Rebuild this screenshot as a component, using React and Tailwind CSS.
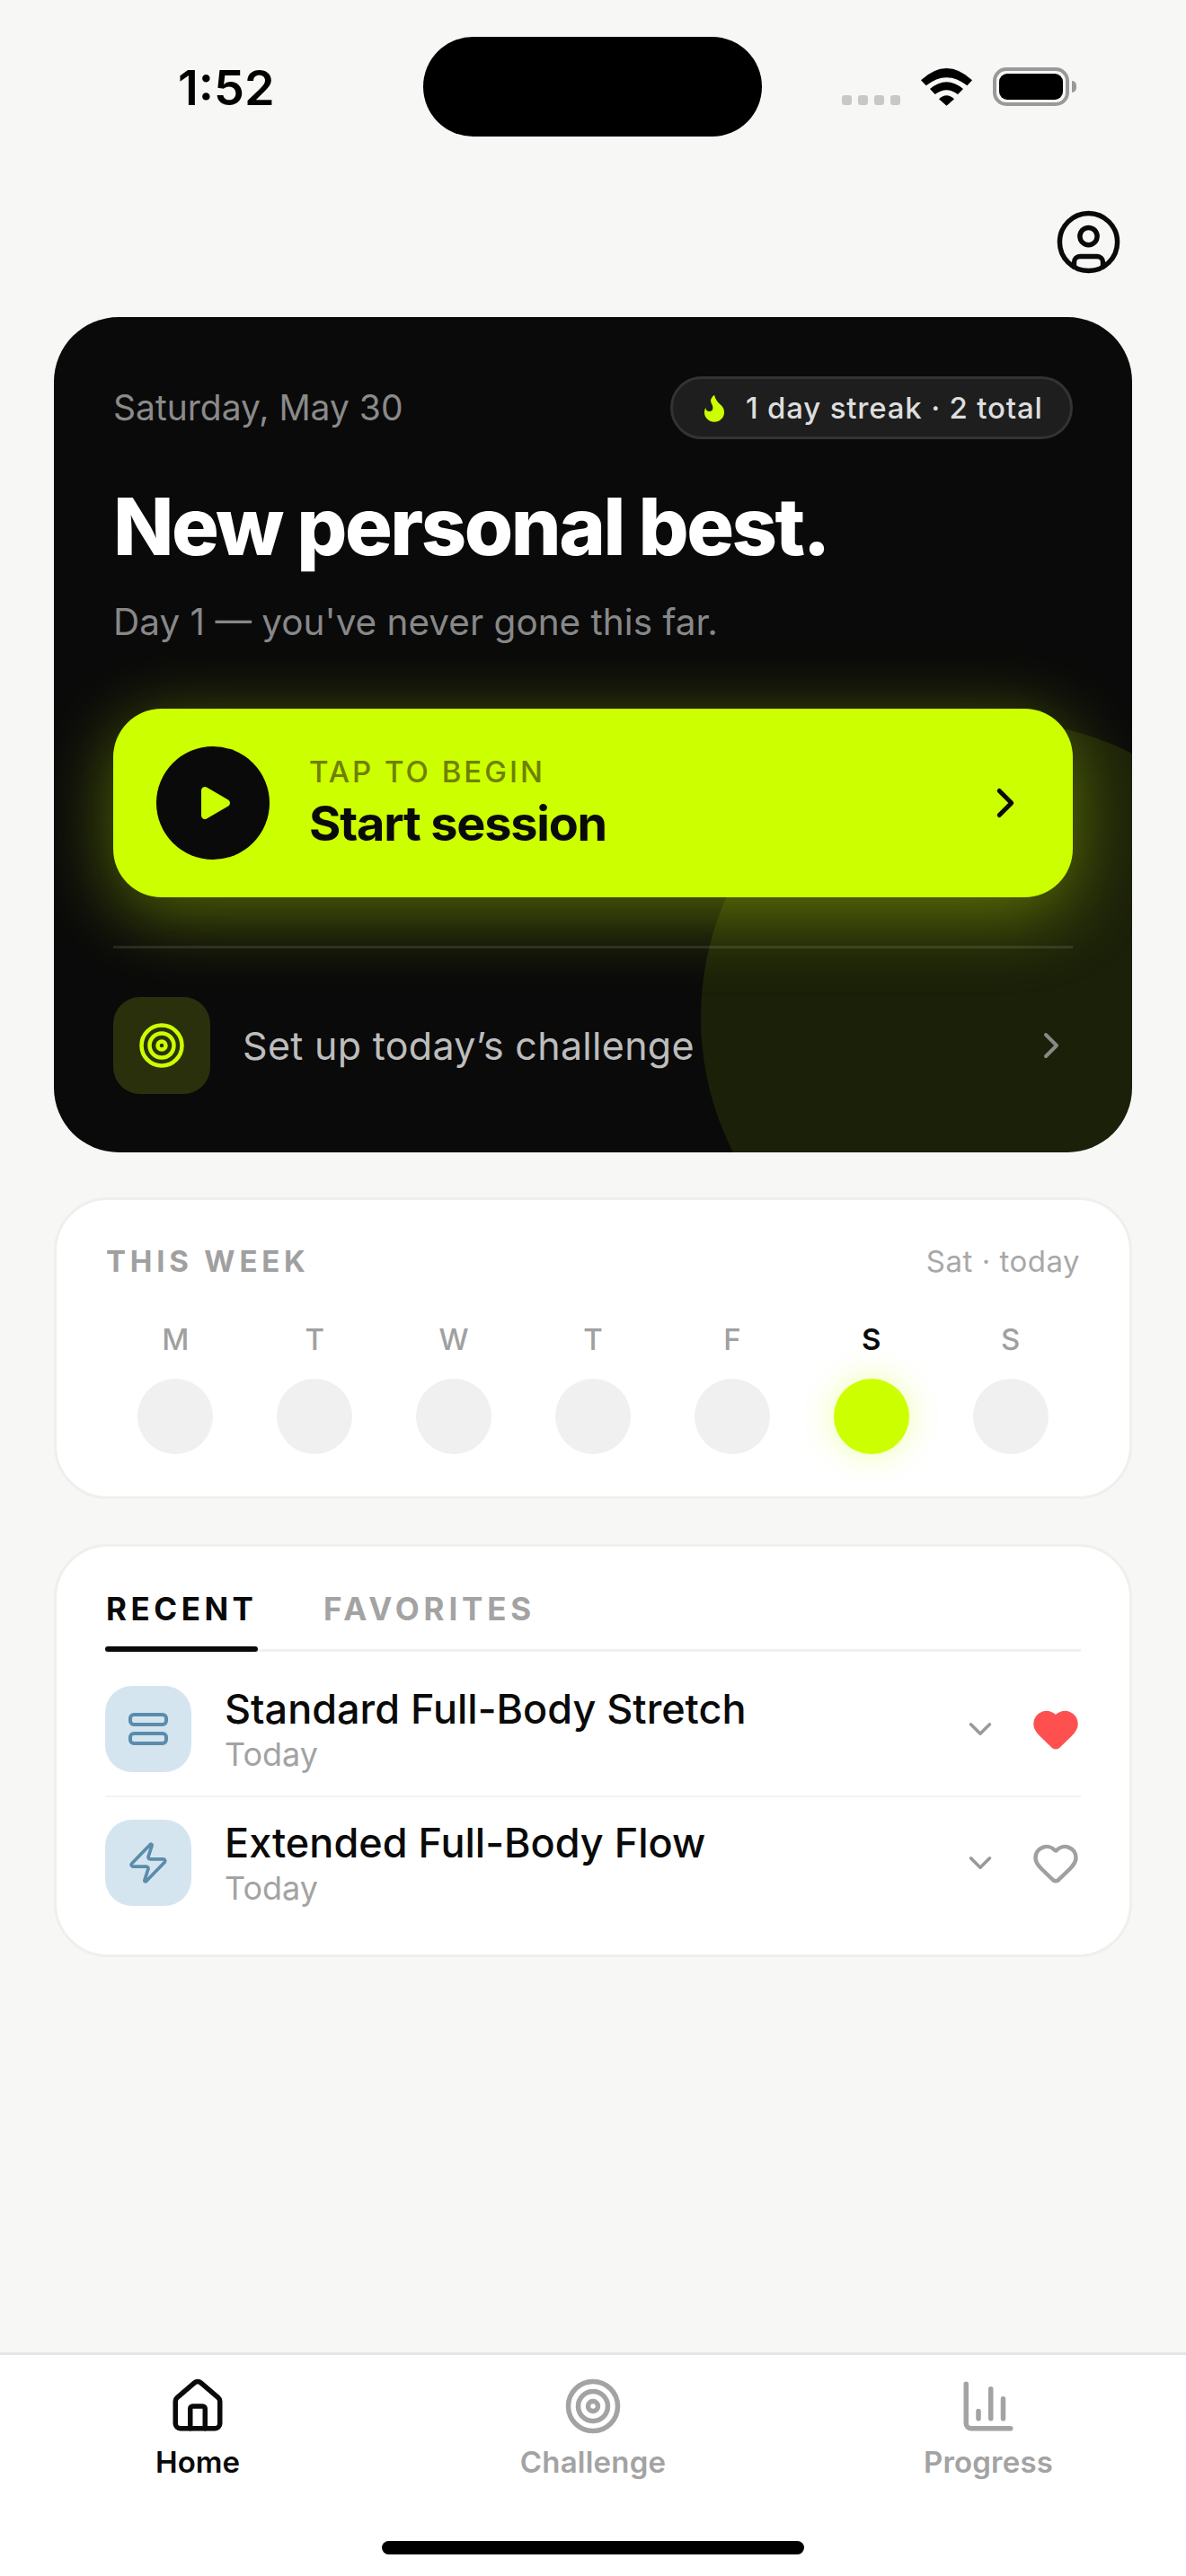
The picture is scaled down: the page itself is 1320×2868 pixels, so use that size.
import { ChartColumn, ChevronDown, ChevronRight, CircleUser, Flame, Heart, House, Play, Target, Zap } from 'lucide-react'

const days = ['M', 'T', 'W', 'T', 'F', 'S', 'S']

function WifiIcon() {
  return (
    <svg width="57" height="42" viewBox="0 0 57 42" fill="#000">
      <path d="M0 13.3Q28.5-13.3 57 13.3L51.5 19.3Q28.5 1 5.7 19.3Z" />
      <path d="M10 23Q28.5 7.5 47 23L41 29Q28.5 19.5 15.7 29Z" />
      <path d="M20 34.3Q28.5 26 37 34.3L28.5 41.7Z" />
    </svg>
  )
}

function StatusBar() {
  return (
    <div className="flex h-[234px] items-start pt-[41px]">
      <div className="flex h-[111px] w-[471px] items-center pl-[198px] text-[54px] leading-none font-semibold text-black">
        <span className="mt-[3px]">1:52</span>
      </div>
      <div className="h-[111px] w-[377px] rounded-full bg-black" />
      <div className="mt-[34px] ml-[89px] flex items-end">
        <div className="mb-[1px] flex gap-[7px]">
          {[0, 1, 2, 3].map((i) => (
            <div key={i} className="h-[11px] w-[11px] rounded-[3px] bg-[#c8c8c8]" />
          ))}
        </div>
        <div className="ml-[23px] h-[42px]">
          <WifiIcon />
        </div>
        <div className="ml-[23px] flex items-center">
          <div className="h-[43px] w-[85px] rounded-[15px] border-[4px] border-[#999] p-[3px]">
            <div className="h-full w-full rounded-[9px] bg-black" />
          </div>
          <div className="ml-[3px] h-[13px] w-[5px] rounded-r-full bg-[#999]" />
        </div>
      </div>
    </div>
  )
}

function Hero() {
  return (
    <section className="relative mx-[60px] h-[930px] overflow-hidden rounded-[72px] bg-[#0a0a0a] px-[66px] pt-[66px]">
      <div className="absolute -right-[180px] -bottom-[180px] h-[660px] w-[660px] rounded-full bg-[#ccff00]/[0.09]" />
      <div className="relative">
        <div className="flex items-center justify-between">
          <span className="text-[39px] leading-[48px] text-[#8a8a8a]">Saturday, May 30</span>
          <div className="flex h-[70px] w-[448px] items-center rounded-full border-[3px] border-[#333] bg-[#1e1e1e] pl-[27px]">
            <Flame size={38} fill="#ccff00" stroke="none" />
            <span className="ml-[16px] text-[33px] leading-none font-medium tracking-[0.8px] text-[#dddddd]">1 day streak · 2 total</span>
          </div>
        </div>
        <h1 className="mt-[49px] text-[88px] leading-[96px] font-extrabold tracking-[-2.5px] text-white">New personal best.</h1>
        <p className="mt-[29px] text-[40.5px] leading-[60px] text-[#888]">Day 1 — you've never gone this far.</p>
        <div className="mt-[66px] flex h-[210px] items-center rounded-[54px] bg-[#ccff00] px-[48px] shadow-[0_18px_84px_rgba(204,255,0,0.4)]">
          <div className="flex h-[126px] w-[126px] items-center justify-center rounded-full bg-[#0a0a0a]">
            <Play size={48} fill="#ccff00" stroke="none" className="ml-[2px]" />
          </div>
          <div className="ml-[44px]">
            <div className="text-[33px] leading-[36px] font-medium tracking-[3px] text-[#6f8000]">TAP TO BEGIN</div>
            <div className="mt-[10px] text-[54px] leading-[60px] font-bold tracking-[-1.2px] text-[#0a0a0a]">Start session</div>
          </div>
          <ChevronRight size={54} strokeWidth={2.2} color="#0a0a0a" className="ml-auto" />
        </div>
        <div className="mt-[54px] h-[3px] bg-white/10" />
        <div className="mt-[54px] flex items-center">
          <div className="flex h-[108px] w-[108px] items-center justify-center rounded-[30px] bg-[#2a300c]">
            <Target size={54} color="#ccff00" strokeWidth={2} />
          </div>
          <span className="ml-[36px] text-[43px] leading-[60px] tracking-[0.3px] text-[#bdbdbd]">Set up today’s challenge</span>
          <ChevronRight size={48} strokeWidth={2} color="#888" className="ml-auto" />
        </div>
      </div>
    </section>
  )
}

function WeekCard() {
  return (
    <section className="mx-[60px] mt-[50px] rounded-[60px] border-[3px] border-[#efefed] bg-white px-[55px] pt-[50px] pb-[47px]">
      <div className="flex items-center justify-between">
        <span className="text-[33px] leading-[36px] font-bold tracking-[4.8px] text-[#a0a0a0]">THIS WEEK</span>
        <span className="text-[33px] leading-[36px] tracking-[0.5px] text-[#a8a8a8]">Sat · today</span>
      </div>
      <div className="mt-[51px] grid grid-cols-7">
        {days.map((d, i) => {
          const today = i === 5
          return (
            <div key={i} className="flex flex-col items-center">
              <span className={today ? 'text-[33px] leading-[36px] font-semibold text-[#0a0a0a]' : 'text-[33px] leading-[36px] font-medium text-[#a0a0a0]'}>{d}</span>
              <div className={today ? 'mt-[26px] h-[84px] w-[84px] rounded-full bg-[#ccff00] shadow-[0_0_36px_rgba(204,255,0,0.35)]' : 'mt-[26px] h-[84px] w-[84px] rounded-full bg-[#f0f0f0]'} />
            </div>
          )
        })}
      </div>
    </section>
  )
}

function RowsIcon() {
  return (
    <svg width="44" height="36" viewBox="0 0 44 36" fill="none" stroke="#5b8cab" strokeWidth="4">
      <rect x="2" y="2" width="40" height="11" rx="4" />
      <rect x="2" y="23" width="40" height="11" rx="4" />
    </svg>
  )
}

function SessionRow({ icon, title, favorite }) {
  return (
    <div className="flex items-center">
      <div className="flex h-[96px] w-[96px] items-center justify-center rounded-[30px] bg-[#d5e5f0]">{icon}</div>
      <div className="ml-[37px]">
        <div className="text-[45px] leading-[52px] font-[550] text-[#0a0a0a]">{title}</div>
        <div className="mt-[4px] text-[36px] leading-[40px] text-[#a3a3a3]">Today</div>
      </div>
      <ChevronDown size={42} strokeWidth={2} color="#999" className="ml-auto" />
      <Heart
        size={54}
        strokeWidth={2}
        color={favorite ? '#ff5050' : '#a0a0a0'}
        fill={favorite ? '#ff5050' : 'none'}
        className="mr-px ml-[36px]"
      />
    </div>
  )
}

function RecentCard() {
  return (
    <section className="mx-[60px] mt-[50px] rounded-[60px] border-[3px] border-[#efefed] bg-white px-[54px] pt-[51px] pb-[54px]">
      <div className="flex gap-[73px] border-b-[3px] border-[#f0f0f0]">
        <div className="-mb-[3px] flex w-[170px] flex-col">
          <span className="pl-px text-[35px] leading-[36px] font-bold tracking-[4.5px] text-[#0a0a0a]">RECENT</span>
          <div className="mt-[24px] h-[6px] rounded-full bg-[#0a0a0a]" />
        </div>
        <span className="text-[35px] leading-[36px] font-bold tracking-[4.8px] text-[#a3a3a3]">FAVORITES</span>
      </div>
      <div className="border-b-2 border-[#f3f3f3] pt-[38px] pb-[26px]">
        <SessionRow icon={<RowsIcon />} title="Standard Full-Body Stretch" favorite />
      </div>
      <div className="pt-[25px]">
        <SessionRow icon={<Zap size={50} strokeWidth={1.8} color="#5b8cab" />} title="Extended Full-Body Flow" />
      </div>
    </section>
  )
}

function NavItem({ icon: Icon, label, active }) {
  return (
    <div className="flex flex-col items-center">
      <Icon size={66} strokeWidth={2} color={active ? '#0a0a0a' : '#a3a3a3'} />
      <span className={active ? 'mt-[8px] text-[33px] leading-[42px] font-semibold text-[#0a0a0a]' : 'mt-[8px] text-[33px] leading-[42px] font-semibold tracking-[0.2px] text-[#a3a3a3]'}>{label}</span>
    </div>
  )
}

function BottomNav() {
  return (
    <nav className="mt-auto border-t-[3px] border-[#e5e5e3] bg-white pt-[24px] pb-[24px]">
      <div className="grid grid-cols-3">
        <NavItem icon={House} label="Home" active />
        <NavItem icon={Target} label="Challenge" />
        <NavItem icon={ChartColumn} label="Progress" />
      </div>
      <div className="mx-auto mt-[67px] h-[15px] w-[470px] rounded-full bg-black" />
    </nav>
  )
}

export default function App() {
  return (
    <div className="flex h-[2868px] w-[1320px] flex-col bg-[#f7f7f5] font-['Inter',sans-serif]">
      <StatusBar />
      <div className="flex justify-end pr-[70px] pb-[48px]">
        <CircleUser size={77} strokeWidth={1.7} color="#0a0a0a" className="-my-[3px]" />
      </div>
      <Hero />
      <WeekCard />
      <RecentCard />
      <BottomNav />
    </div>
  )
}
